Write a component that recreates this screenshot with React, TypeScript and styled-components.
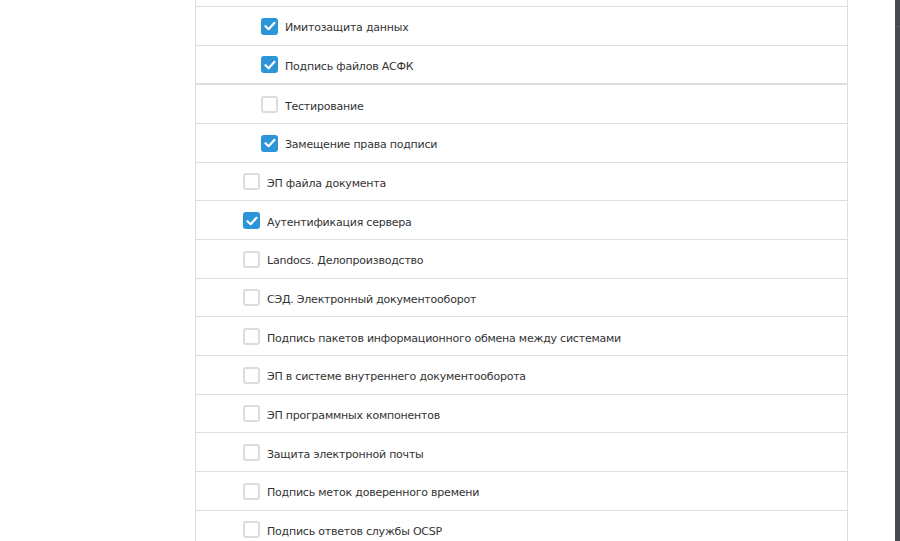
import React from "react";
import styled, { createGlobalStyle } from "styled-components";

const Global = createGlobalStyle`
  html, body { margin: 0; padding: 0; background: #ffffff; }
  body { font-family: "DejaVu Sans", Verdana, sans-serif; overflow: hidden; }
`;

const Page = styled.div`
  display: flex;
  width: 900px;
  height: 541px;
  overflow: hidden;
`;

const Main = styled.div`
  flex: 1;
  display: flex;
  padding-left: 195px;
  padding-right: 47px;
  background: #ffffff;
`;

const Panel = styled.div`
  flex: 1;
  border-left: 1px solid #dedede;
  border-right: 1px solid #dedede;
  display: flex;
  flex-direction: column;
`;

const TopEdge = styled.div`
  flex: none;
  height: 7px;
  box-sizing: border-box;
  border-bottom: 1px solid #dedede;
`;

const Row = styled.label<{ $level: number; $thick?: boolean }>`
  flex: none;
  box-sizing: border-box;
  height: ${(p) => (p.$thick ? "39.66px" : "38.66px")};
  border-bottom: ${(p) => (p.$thick ? "2px" : "1px")} solid #dedede;
  display: flex;
  align-items: center;
  gap: 7px;
  padding-left: ${(p) => (p.$level === 2 ? 65 : 47)}px;
  font-size: 11px;
  letter-spacing: -0.22px;
  color: #333333;
  cursor: pointer;
`;

const Box = styled.span<{ $checked: boolean }>`
  flex: none;
  width: 17px;
  height: 17px;
  box-sizing: border-box;
  border-radius: 3px;
  display: flex;
  align-items: center;
  justify-content: center;
  margin-top: 1px;
  background: ${(p) => (p.$checked ? "#2b95d8" : "#ffffff")};
  border: ${(p) => (p.$checked ? "none" : "2px solid #dcdcdc")};
`;

const Label = styled.span`
  white-space: nowrap;
  line-height: 14px;
  padding-top: 5px;
`;

const ScrollEdge = styled.div`
  flex: none;
  width: 5px;
  background: #46494e;
  position: relative;
`;

const ScrollMark = styled.div`
  position: absolute;
  left: 0;
  right: 0;
  top: 26px;
  height: 1px;
  background: #575a5f;
`;

const Check = () => (
  <svg width="12" height="10" viewBox="0 0 12 10">
    <path d="M1.5 5.2 L4.6 8.2 L10.5 1.8" fill="none" stroke="#ffffff" strokeWidth="2.2" strokeLinecap="round" strokeLinejoin="round" />
  </svg>
);

type Item = { text: string; level: number; checked: boolean; thick?: boolean };

const items: Item[] = [
  { text: "Имитозащита данных", level: 2, checked: true },
  { text: "Подпись файлов АСФК", level: 2, checked: true, thick: true },
  { text: "Тестирование", level: 2, checked: false },
  { text: "Замещение права подписи", level: 2, checked: true },
  { text: "ЭП файла документа", level: 1, checked: false },
  { text: "Аутентификация сервера", level: 1, checked: true },
  { text: "Landocs. Делопроизводство", level: 1, checked: false },
  { text: "СЭД. Электронный документооборот", level: 1, checked: false },
  { text: "Подпись пакетов информационного обмена между системами", level: 1, checked: false },
  { text: "ЭП в системе внутреннего документооборота", level: 1, checked: false },
  { text: "ЭП программных компонентов", level: 1, checked: false },
  { text: "Защита электронной почты", level: 1, checked: false },
  { text: "Подпись меток доверенного времени", level: 1, checked: false },
  { text: "Подпись ответов службы OCSP", level: 1, checked: false },
];

export default function App() {
  return (
    <>
      <Global />
      <Page>
        <Main>
          <Panel>
            <TopEdge />
            {items.map((it) => (
              <Row key={it.text} $level={it.level} $thick={it.thick}>
                <Box $checked={it.checked}>{it.checked && <Check />}</Box>
                <Label>{it.text}</Label>
              </Row>
            ))}
          </Panel>
        </Main>
        <ScrollEdge>
          <ScrollMark />
        </ScrollEdge>
      </Page>
    </>
  );
}
